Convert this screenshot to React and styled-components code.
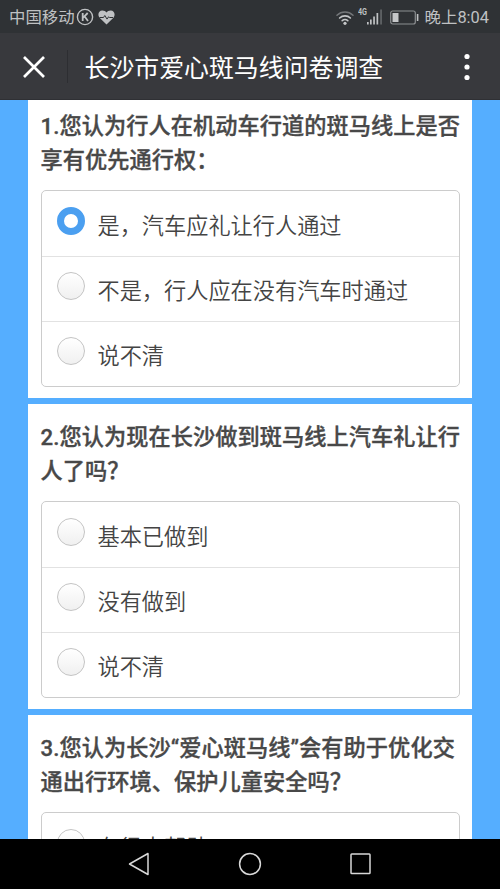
import React from "react";
import styled, { createGlobalStyle } from "styled-components";

const GlobalStyle = createGlobalStyle`
  * { box-sizing: border-box; }
  body { margin: 0; background: #000; }
`;

const Screen = styled.div`
  width: 500px;
  height: 889px;
  display: flex;
  flex-direction: column;
  overflow: hidden;
  font-family: Roboto, "Noto Sans CJK SC", sans-serif;
`;

const StatusBar = styled.header`
  flex: none;
  height: 33px;
  padding: 2px 11px 0 9px;
  display: flex;
  align-items: center;
  background: #2f3235;
  color: #bfc1c3;
  font-size: 16.4px;
  line-height: 31px;
  white-space: nowrap;
`;

const StatusIcons = styled.div`
  display: flex;
  align-items: center;
  gap: 4px;
  margin: 0 0 1px 1px;
`;

const StatusRight = styled.div`
  display: flex;
  align-items: center;
  margin-left: auto;
`;

const SignalSlot = styled.span`
  display: flex;
  margin: 0 6px 3px 4px;
`;

const Clock = styled.span`
  margin-left: 6px;
  font-size: 16.4px;
`;

const TitleBar = styled.nav`
  flex: none;
  height: 67px;
  display: flex;
  align-items: center;
  background: #38393d;
  border-bottom: 1px solid #2f3034;
  color: #fff;
`;

const BarButton = styled.button`
  width: 67px;
  height: 66px;
  padding: 2px 0 0;
  border: 0;
  background: none;
  color: inherit;
  display: flex;
  align-items: center;
  justify-content: center;
`;

const Divider = styled.span`
  width: 1px;
  height: 33px;
  background: #2d2e32;
`;

const Title = styled.h1`
  flex: 1;
  margin: 0 0 0 16.5px;
  padding-top: 5px;
  font-size: 24.9px;
  font-weight: 400;
  line-height: 61px;
  white-space: nowrap;
`;

const Survey = styled.main`
  flex: 1;
  min-height: 0;
  overflow: hidden;
  padding: 0 28px;
  background: #55aeff;
  display: flex;
  flex-direction: column;
  gap: 5.6px;
`;

const Card = styled.section`
  flex: none;
  height: ${(p) => (p.$first ? "298.2px" : "305.4px")};
  padding: ${(p) => (p.$first ? "10.3px" : "17.5px")} 12.5px 0;
  background: #fff;
`;

const Question = styled.h2`
  margin: 0 0 13.3px;
  color: #484848;
  font-size: 22.2px;
  font-weight: 500;
  line-height: 33.3px;
  letter-spacing: 0.07px;
  white-space: nowrap;
  -webkit-text-stroke: 0.35px #484848;
`;

const Options = styled.div`
  border: 1.4px solid #ccc;
  border-radius: 5px;
`;

const Option = styled.label`
  display: flex;
  align-items: flex-start;
  height: ${(p) => (p.$first ? "64.4px" : "65.2px")};
  padding-left: 15px;
  border-top: ${(p) => (p.$first ? "0" : "1px solid #e2e2e2")};
  color: #444;
`;

const Radio = styled.span`
  flex: none;
  width: 28px;
  height: 28px;
  margin-top: 15.4px;
  border-radius: 50%;
  border: ${(p) => (p.$checked ? "7px solid #4b9ff0" : "1.4px solid #c4c4c4")};
  background: ${(p) => (p.$checked ? "#fff" : "linear-gradient(#fff, #f0f0f0)")};
`;

const OptionText = styled.span`
  margin: 18.5px 0 0 13px;
  font-size: 22.2px;
  font-weight: 350;
  line-height: 33px;
  white-space: nowrap;
`;

const NavBar = styled.footer`
  flex: none;
  height: 50px;
  padding-right: 1px;
  display: flex;
  align-items: center;
  justify-content: center;
  gap: 87px;
  background: #000;
`;

const questions = [
  {
    lines: ["1.您认为行人在机动车行道的斑马线上是否", "享有优先通行权："],
    options: ["是，汽车应礼让行人通过", "不是，行人应在没有汽车时通过", "说不清"],
    selected: 0,
  },
  {
    lines: ["2.您认为现在长沙做到斑马线上汽车礼让行", "人了吗？"],
    options: ["基本已做到", "没有做到", "说不清"],
  },
  {
    lines: ["3.您认为长沙“爱心斑马线”会有助于优化交", "通出行环境、保护儿童安全吗？"],
    options: ["有很大帮助"],
  },
];

const RoamingIcon = () => (
  <svg width="18" height="18" viewBox="0 0 18 18" fill="none" stroke="#bfc1c3">
    <circle cx="9" cy="9" r="7.6" strokeWidth="1.4" />
    <path d="M6.7 5v8M11.7 5L7.2 9.6M8.5 8.2l3.5 4.8" strokeWidth="1.8" />
  </svg>
);

const HeartIcon = () => (
  <svg width="17" height="17" viewBox="0 0 17 17" fill="none">
    <path d="M8.5 15.5L1.8 9C-.9 6 .6 1.5 4.3 1.5c2 0 3.4.8 4.2 2 .8-1.2 2.2-2 4.2-2 3.7 0 5.200 4.500 2.500 7.500z" fill="#bfc1c3" />
    <path d="M1.500 8.500h4l1.300-2 2.200 3.600 1.600-2.300.9.700h3.500" stroke="#2f3235" strokeWidth="1" />
  </svg>
);

const WifiIcon = () => (
  <svg width="18" height="16" viewBox="0 0 18 16" fill="none" strokeLinecap="round">
    <path d="M1 5.200C5.500.9 12.500.9 17 5.200" stroke="#74777a" strokeWidth="1.500" />
    <path d="M3.600 8c3-2.900 7.800-2.900 10.800 0M6.200 10.700c1.700-1.500 3.900-1.500 5.600 0" stroke="#c5c7c9" strokeWidth="1.600" />
    <circle cx="9" cy="13.300" r="1.600" fill="#c5c7c9" />
  </svg>
);

const SignalIcon = () => (
  <svg width="26" height="18" viewBox="0 0 26 18">
    <text x="0" y="8" fontFamily="Roboto, sans-serif" fontSize="9" fontWeight="700" fill="#bfc1c3" textLength="9" lengthAdjust="spacingAndGlyphs">4G</text>
    <path d="M9 15h1.700v2.500H9zM12 12.500h1.700v5H12zM15.200 9.500h1.700v8h-1.700zM18.500 6h1.700v11.500h-1.700z" fill="#bfc1c3" />
    <path d="M22.300 2.500h1.500v15h-1.500z" fill="#696c6f" />
  </svg>
);

const BatteryIcon = () => (
  <svg width="29" height="15" viewBox="0 0 29 15">
    <rect x=".7" y="1" width="24.600" height="13" rx="2" fill="none" stroke="#8c8f91" strokeWidth="1.200" />
    <path d="M2.500 3h6v9h-6z" fill="#c5c7c9" />
    <path d="M26.800 4h1.600v7h-1.600z" fill="#bfc1c3" />
  </svg>
);

const CloseIcon = () => (
  <svg width="24" height="24" viewBox="0 0 24 24" fill="none" stroke="#fff" strokeWidth="2.700">
    <path d="M2 2l20 20M22 2L2 22" />
  </svg>
);

const MoreIcon = () => (
  <svg width="6" height="28" viewBox="0 0 6 28" fill="#fff">
    <circle cx="3" cy="3.500" r="2.600" />
    <circle cx="3" cy="14" r="2.600" />
    <circle cx="3" cy="24.500" r="2.600" />
  </svg>
);

const NavIcon = ({ children }) => (
  <svg width="24" height="24" viewBox="0 0 24 24" fill="none" stroke="#d8d8d8" strokeWidth="1.500" strokeLinejoin="round">
    {children}
  </svg>
);

export default function App() {
  return (
    <Screen>
      <GlobalStyle />
      <StatusBar>
        <span>中国移动</span>
        <StatusIcons>
          <RoamingIcon />
          <HeartIcon />
        </StatusIcons>
        <StatusRight>
          <WifiIcon />
          <SignalSlot>
            <SignalIcon />
          </SignalSlot>
          <BatteryIcon />
          <Clock>晚上8:04</Clock>
        </StatusRight>
      </StatusBar>
      <TitleBar>
        <BarButton aria-label="关闭">
          <CloseIcon />
        </BarButton>
        <Divider />
        <Title>长沙市爱心斑马线问卷调查</Title>
        <BarButton aria-label="更多">
          <MoreIcon />
        </BarButton>
      </TitleBar>
      <Survey>
        {questions.map((q, i) => (
          <Card key={i} $first={i === 0}>
            <Question>
              {q.lines[0]}
              <br />
              {q.lines[1]}
            </Question>
            <Options>
              {q.options.map((text, j) => (
                <Option key={text} $first={j === 0}>
                  <Radio $checked={q.selected === j} />
                  <OptionText>{text}</OptionText>
                </Option>
              ))}
            </Options>
          </Card>
        ))}
      </Survey>
      <NavBar>
        <NavIcon>
          <path d="M21 1.500v21L2.500 12z" />
        </NavIcon>
        <NavIcon>
          <circle cx="12" cy="12" r="10.400" />
        </NavIcon>
        <NavIcon>
          <rect x="2" y="2" width="19" height="19.500" rx=".8" />
        </NavIcon>
      </NavBar>
    </Screen>
  );
}
